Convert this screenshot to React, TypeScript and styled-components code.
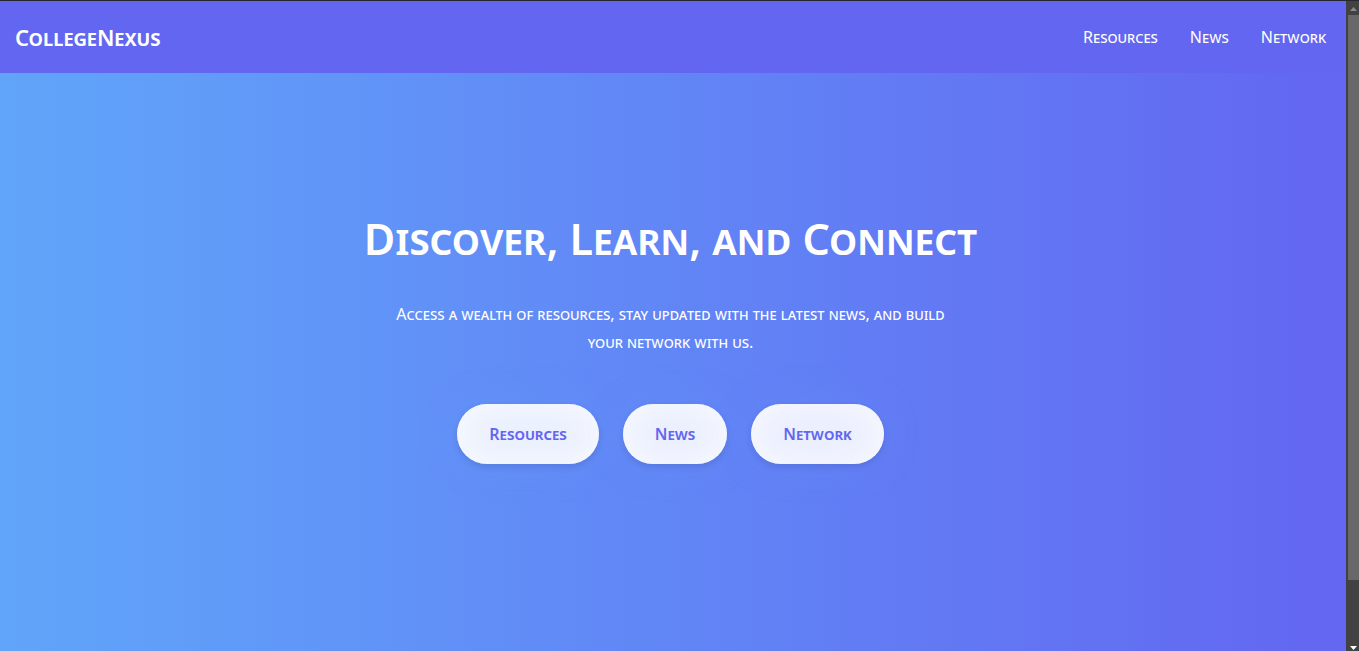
import React from "react";
import styled, { createGlobalStyle } from "styled-components";

const GlobalStyle = createGlobalStyle`
  *, *::before, *::after { box-sizing: border-box; }
  body {
    margin: 0;
    font-family: "Noto Sans", "Open Sans", sans-serif;
    font-variant-caps: small-caps;
    color: #ffffff;
  }
`;

const Window = styled.div`
  display: flex;
  min-height: 100vh;
  border-top: 1px solid #26262e;
`;

const Page = styled.div`
  flex: 1;
  min-width: 0;
  display: flex;
  flex-direction: column;
`;

const Header = styled.header`
  display: flex;
  align-items: center;
  justify-content: space-between;
  padding: 20px 20px 20px 15px;
  background: #6366f1;
`;

const Brand = styled.a`
  color: inherit;
  font-size: 22px;
  line-height: 32px;
  font-weight: 600;
  text-decoration: none;
`;

const Nav = styled.nav`
  display: flex;
  gap: 32px;
`;

const NavLink = styled.a`
  color: inherit;
  font-size: 16px;
  line-height: 24px;
  text-decoration: none;
`;

const Hero = styled.main`
  flex: 1;
  display: flex;
  flex-direction: column;
  align-items: center;
  padding: 136px 5px 0 0;
  background: linear-gradient(to right, #60a5fa, #6366f1);
  text-align: center;
`;

const Title = styled.h1`
  margin: 0 0 31px;
  font-size: 43px;
  line-height: 60px;
  font-weight: 600;
`;

const Lead = styled.p`
  max-width: 576px;
  margin: 0 0 48px;
  font-size: 16px;
  line-height: 28px;
`;

const Actions = styled.div`
  display: flex;
  gap: 24px;
`;

const Action = styled.button`
  height: 60px;
  padding: 0 32px;
  border: 0;
  border-radius: 30px;
  background: rgba(255, 255, 255, 0.86);
  box-shadow:
    inset 0 0 40px rgba(255, 255, 255, 0.8),
    0 3px 6px rgba(50, 60, 130, 0.2),
    0 0 40px rgba(110, 160, 255, 0.2);
  color: #6366f1;
  font: inherit;
  font-variant-caps: small-caps;
  font-size: 16px;
  font-weight: 600;
  line-height: 24px;
  cursor: pointer;
`;

const Scrollbar = styled.div`
  flex: none;
  display: flex;
  flex-direction: column;
  align-items: stretch;
  width: 13px;
  padding-left: 2px;
  background: #424242;
`;

const Arrow = styled.svg`
  display: block;
  width: 11px;
  height: 14px;
`;

const Track = styled.div`
  flex: 1;
  display: flex;
  flex-direction: column;
`;

const Thumb = styled.div`
  flex: 10;
  background: #686868;
`;

const TrackRest = styled.div`
  flex: 1;
`;

const sections = ["Resources", "News", "Network"];

export default function App() {
  return (
    <>
      <GlobalStyle />
      <Window>
        <Page>
          <Header>
            <Brand href="#">CollegeNexus</Brand>
            <Nav>
              {sections.map((name) => (
                <NavLink key={name} href={`#${name.toLowerCase()}`}>{name}</NavLink>
              ))}
            </Nav>
          </Header>
          <Hero>
            <Title>Discover, Learn, and Connect</Title>
            <Lead>
              Access a wealth of resources, stay updated with the latest news, and build your
              network with us.
            </Lead>
            <Actions>
              {sections.map((name) => (
                <Action key={name} type="button">{name}</Action>
              ))}
            </Actions>
          </Hero>
        </Page>
        <Scrollbar aria-hidden="true">
          <Arrow viewBox="0 0 11 14">
            <path d="M2 10L5.500 6L9 10Z" fill="#8a8a8a" />
          </Arrow>
          <Track>
            <Thumb />
            <TrackRest />
          </Track>
          <Arrow viewBox="0 0 11 14">
            <path d="M2 9L5.500 13L9 9Z" fill="#ffffff" />
          </Arrow>
        </Scrollbar>
      </Window>
    </>
  );
}
